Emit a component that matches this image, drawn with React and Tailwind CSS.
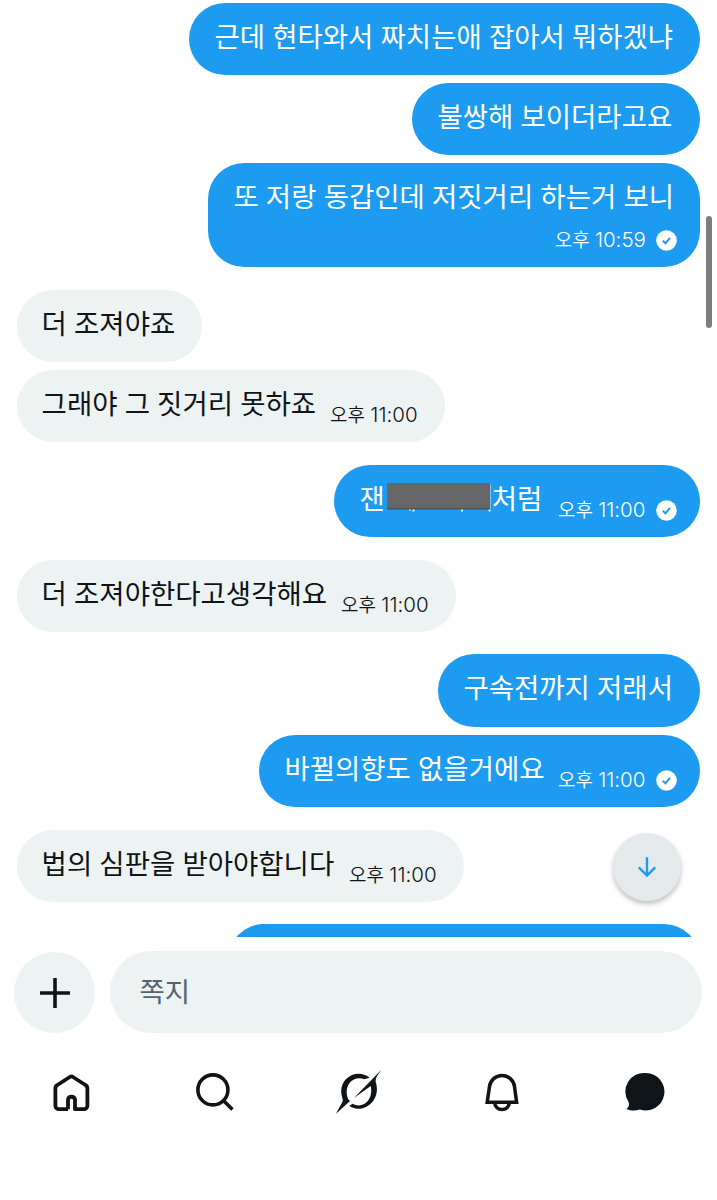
const GROUPS = [
  {
    mine: true,
    items: [
      { text: "근데 현타와서 짜치는애 잡아서 뭐하겠냐", width: "w-[511px]" },
      { text: "불쌍해 보이더라고요", width: "w-[288px]" },
      { text: "또 저랑 동갑인데 저짓거리 하는거 보니", time: "오후 10:59", stacked: true, width: "w-[492px]" },
    ],
  },
  {
    mine: false,
    items: [
      { text: "더 조져야죠", width: "w-[185px]" },
      { text: "그래야 그 짓거리 못하죠", time: "오후 11:00", width: "w-[428px]" },
    ],
  },
  {
    mine: true,
    items: [{ text: "잰", rest: "처럼", time: "오후 11:00", width: "w-[366px]" }],
  },
  {
    mine: false,
    items: [{ text: "더 조져야한다고생각해요", time: "오후 11:00", width: "w-[439px]" }],
  },
  {
    mine: true,
    items: [
      { text: "구속전까지 저래서", width: "w-[262px]" },
      { text: "바뀔의향도 없을거에요", time: "오후 11:00", width: "w-[441px]" },
    ],
  },
  {
    mine: false,
    items: [{ text: "법의 심판을 받아야합니다", time: "오후 11:00", width: "w-[447px]" }],
  },
  {
    mine: true,
    items: [{ text: "", width: "w-[472px]" }],
  },
];

function SentBadge() {
  return (
    <svg viewBox="0 0 21 21" className="ml-[10.5px] size-[21px] shrink-0">
      <circle cx="10.5" cy="10.5" r="10.3" fill="#fff" />
      <path d="M6.8 10.8l2.6 2.5 4.6-5.4" fill="none" stroke="#1d9bf0" strokeWidth="2" />
    </svg>
  );
}

function Time({ value, mine }) {
  const [period, clock] = value.split(" ");

  return (
    <span className="flex items-center">
      <span className="font-[Inter,'Noto_Sans_CJK_KR',sans-serif] text-[20.5px] leading-[24px] font-[350] whitespace-nowrap [word-spacing:-0.5px]">
        <span className="text-[19px]">{period}</span> {clock}
      </span>
      {mine && <SentBadge />}
    </span>
  );
}

function Redaction() {
  return (
    <svg viewBox="0 0 106 30" className="mt-[6px] mr-[1px] h-[30px] w-[106px]">
      <path d="M25 26v1.5M28.5 26v2.5M77 26v2.5M104.500 1v27.5" stroke="#fff" strokeWidth="1.8" />
      <rect x="2" width="103" height="26" fill="#676767" />
      <rect x="2" y="25" width="103" height="1.5" fill="#4d5357" />
    </svg>
  );
}

function Bubble({ item, mine }) {
  const tone = mine ? "bg-[#1d9bf0] text-white" : "bg-[#edf3f3] text-[#0f1419]";

  if (item.stacked) {
    return (
      <div className={`flex h-[104px] shrink-0 flex-col rounded-[36px] pt-[12px] pr-[23px] pl-[25px] ${tone} ${item.width}`}>
        <span className="text-[27.5px] leading-[40px] whitespace-nowrap">{item.text}</span>
        <div className="mt-[13px] flex justify-end">
          <Time value={item.time} mine={mine} />
        </div>
      </div>
    );
  }

  return (
    <div className={`flex h-[72.5px] shrink-0 rounded-[36.25px] pt-[12px] pl-[25px] ${tone} ${item.width}`}>
      <span className="flex text-[27.5px] leading-[40px] whitespace-nowrap">
        {item.text}
        {item.rest && (
          <>
            <Redaction />
            {item.rest}
          </>
        )}
      </span>
      {item.time && (
        <div className={`mt-[21.5px] ml-auto ${mine ? "pr-[23.5px]" : "pr-[27px]"}`}>
          <Time value={item.time} mine={mine} />
        </div>
      )}
    </div>
  );
}

function NavBar() {
  return (
    <nav className="flex h-[116px] items-start pt-[18px] text-[#0f1419]">
      <a className="flex flex-1 justify-center">
        <svg viewBox="0 0 42 42" className="mt-[0.5px] mr-[1px] size-[42px]" fill="none" stroke="currentColor" strokeWidth="3.8" strokeLinejoin="round">
          <path d="M18 37.2V27.5a3.6 3.6 0 0 1 7 0v9.7h9a3.6 3.6 0 0 0 3.4-3.5V16.5a4 4 0 0 0-2-3.5L23 5a3 3 0 0 0-3.2 0L7.4 13a4 4 0 0 0-2 3.5v17.2a3.6 3.6 0 0 0 3.5 3.5H18" />
        </svg>
      </a>
      <a className="flex flex-1 justify-center">
        <svg viewBox="0 0 42 42" className="size-[42px]" fill="none" stroke="currentColor" strokeWidth="3.6">
          <circle cx="18.9" cy="18.9" r="15" />
          <path d="M29.4 29.4l9 9" />
        </svg>
      </a>
      <a className="flex flex-1 justify-center">
        <svg viewBox="43 53 144 144" className="-mt-[3px] size-[48px]" fill="currentColor">
          <path d="M147 82C104 50 47 90 65 143c1 5 2 7 1 10L46 190l42-38-6-6C67 105 98 74 131 87z" />
          <path d="M182 58L100 143l50-36c10 43-26 70-54 53l-10 6c40 29 96-14 80-68-3-12 1-19 16-40z" />
        </svg>
      </a>
      <a className="flex flex-1 justify-center">
        <svg viewBox="0 0 42 42" className="mt-px size-[42px]" fill="none" stroke="currentColor" strokeWidth="3.5">
          <path d="M6.200 30.200L8.500 14.500a12.600 12.600 0 0 1 25 0L35.600 30.200z" />
          <path d="M13.800 31a7.200 6.600 0 0 0 14.400 0" />
        </svg>
      </a>
      <a className="flex flex-1 justify-center">
        <svg viewBox="0 0 42 42" className="size-[42px]" fill="currentColor">
          <path d="M22 2a18.700 18.700 0 1 1-6 36.500c-5 1.500-9 1.500-13.500-.500 2.500-2 3-4.500 2-7A18.700 18.700 0 0 1 22 2z" />
        </svg>
      </a>
    </nav>
  );
}

export default function App() {
  return (
    <div className="flex h-[1200px] w-[717px] flex-col overflow-hidden bg-white font-['Noto_Sans_CJK_KR',sans-serif] font-normal [word-spacing:1px]">

      {/* Messages */}
      <main className="relative h-[937px] shrink-0 overflow-hidden pt-[2.5px]">
        <div className="flex flex-col gap-[22.3px] px-[16.6px]">
          {GROUPS.map((group, i) => (
            <section key={i} className={`flex flex-col gap-[7.9px] ${group.mine ? "items-end" : "items-start"}`}>
              {group.items.map((item) => (
                <Bubble key={item.text} item={item} mine={group.mine} />
              ))}
            </section>
          ))}
        </div>

        <div className="absolute top-[216px] right-[5px] h-[112px] w-[6px] rounded-full bg-[#7d7d7d]" />

        <button className="absolute top-[833px] left-[613px] flex size-[68px] items-center justify-center rounded-full bg-[#e4eaec] shadow-[0_3px_5px_rgba(0,0,0,0.25)]">
          <svg viewBox="0 0 24 24" className="size-[24px]" fill="none" stroke="#1d9bf0" strokeWidth="2.4">
            <path d="M12 2.300v18M3.800 12.400l8.200 8.200 8.200-8.200" />
          </svg>
        </button>
      </main>

      {/* Composer */}
      <div className="flex h-[96px] shrink-0 gap-[15px] pt-[14px] pl-[14px]">
        <button className="mt-px flex size-[81px] items-center justify-center rounded-full bg-[#edf3f3]">
          <svg viewBox="0 0 30 30" className="size-[30px]" stroke="#0f1419" strokeWidth="3.6">
            <path d="M15 0v30M0 15h30" />
          </svg>
        </button>
        <div className="h-[82px] w-[592px] rounded-full bg-[#edf3f3] pt-[18.5px] pl-[29.5px] text-[27.5px] leading-[40px] text-[#536471]">
          쪽지
        </div>
      </div>

      <div className="h-[20px] shrink-0" />
      <NavBar />
    </div>
  );
}
